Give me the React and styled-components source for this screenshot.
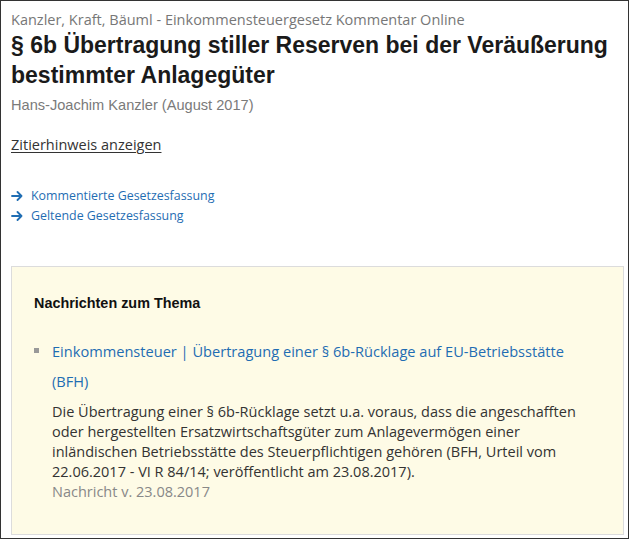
import styled, { createGlobalStyle } from "styled-components";

const Global = createGlobalStyle`
  html, body {
    margin: 0;
    padding: 0;
    background: #fff;
  }
`;

const Frame = styled.div`
  box-sizing: border-box;
  width: 629px;
  height: 539px;
  border: 1px solid #333;
  padding: 9px 5px 0 10px;
  font-family: "Open Sans", sans-serif;
  color: #333;
`;

const Meta = styled.div`
  font-size: 14.5px;
  line-height: 20px;
  color: #777;
`;

const Title = styled.h1`
  margin: 0;
  font-family: "Liberation Sans", Arial, sans-serif;
  font-weight: bold;
  font-size: 23px;
  line-height: 30px;
  color: #1a1a1a;
`;

const Author = styled.div`
  margin-top: 5px;
  font-family: "Liberation Sans", Arial, sans-serif;
  font-size: 14.6px;
  line-height: 20px;
  color: #7a7a7a;
`;

const Cite = styled.a`
  display: inline-block;
  margin-top: 20px;
  font-size: 14.5px;
  line-height: 20px;
  color: #333;
  text-decoration: underline;
  text-underline-offset: 2px;
`;

const LinkList = styled.div`
  margin-top: 31px;
  display: flex;
  flex-direction: column;
`;

const ArrowLink = styled.a`
  display: flex;
  align-items: center;
  gap: 8px;
  font-size: 12.4px;
  line-height: 20px;
  color: #1f6db3;
  text-decoration: none;
`;

const NewsBox = styled.section`
  box-sizing: border-box;
  margin-top: 40px;
  width: 613px;
  height: 269px;
  border: 1px solid #dcdcdc;
  background: #fefbe6;
  padding: 26px 0 0 22px;
`;

const NewsHeading = styled.h2`
  margin: 0;
  font-family: "Liberation Sans", Arial, sans-serif;
  font-weight: bold;
  font-size: 14.4px;
  line-height: 20px;
  color: #111;
`;

const NewsItem = styled.div`
  position: relative;
  margin-top: 23px;
  padding-left: 18px;
  width: 562px;
  box-sizing: border-box;
  &::before {
    content: "";
    position: absolute;
    left: 0;
    top: 12px;
    width: 5px;
    height: 5px;
    background: #999;
  }
`;

const NewsLink = styled.a`
  display: block;
  font-size: 14.6px;
  line-height: 30px;
  color: #1f6db3;
  text-decoration: none;
`;

const NewsText = styled.p`
  margin: 6px 0 0;
  font-size: 14.5px;
  line-height: 20px;
  color: #333;
`;

const NewsDate = styled.div`
  font-size: 14.5px;
  line-height: 20px;
  color: #888;
`;

const Arrow = () => (
  <svg width="12" height="10" viewBox="0 0 12 10" fill="none">
    <path
      d="M1 5h9.5M6.5 1l4 4-4 4"
      stroke="#1f6db3"
      strokeWidth="1.8"
      strokeLinecap="round"
      strokeLinejoin="round"
    />
  </svg>
);

export default function App() {
  return (
    <>
      <Global />
      <Frame>
        <Meta>Kanzler, Kraft, Bäuml - Einkommensteuergesetz Kommentar Online</Meta>
        <Title>
          § 6b Übertragung stiller Reserven bei der Veräußerung bestimmter
          Anlagegüter
        </Title>
        <Author>Hans-Joachim Kanzler (August 2017)</Author>
        <Cite href="#">Zitierhinweis anzeigen</Cite>
        <LinkList>
          <ArrowLink href="#">
            <Arrow />
            Kommentierte Gesetzesfassung
          </ArrowLink>
          <ArrowLink href="#">
            <Arrow />
            Geltende Gesetzesfassung
          </ArrowLink>
        </LinkList>
        <NewsBox>
          <NewsHeading>Nachrichten zum Thema</NewsHeading>
          <NewsItem>
            <NewsLink href="#">
              Einkommensteuer | Übertragung einer § 6b-Rücklage auf
              EU-Betriebsstätte (BFH)
            </NewsLink>
            <NewsText>
              Die Übertragung einer § 6b-Rücklage setzt u.a. voraus, dass die
              angeschafften oder hergestellten Ersatzwirtschaftsgüter zum
              Anlagevermögen einer inländischen Betriebsstätte des
              Steuerpflichtigen gehören (BFH, Urteil vom 22.06.2017 - VI R
              84/14; veröffentlicht am 23.08.2017).
            </NewsText>
            <NewsDate>Nachricht v. 23.08.2017</NewsDate>
          </NewsItem>
        </NewsBox>
      </Frame>
    </>
  );
}
